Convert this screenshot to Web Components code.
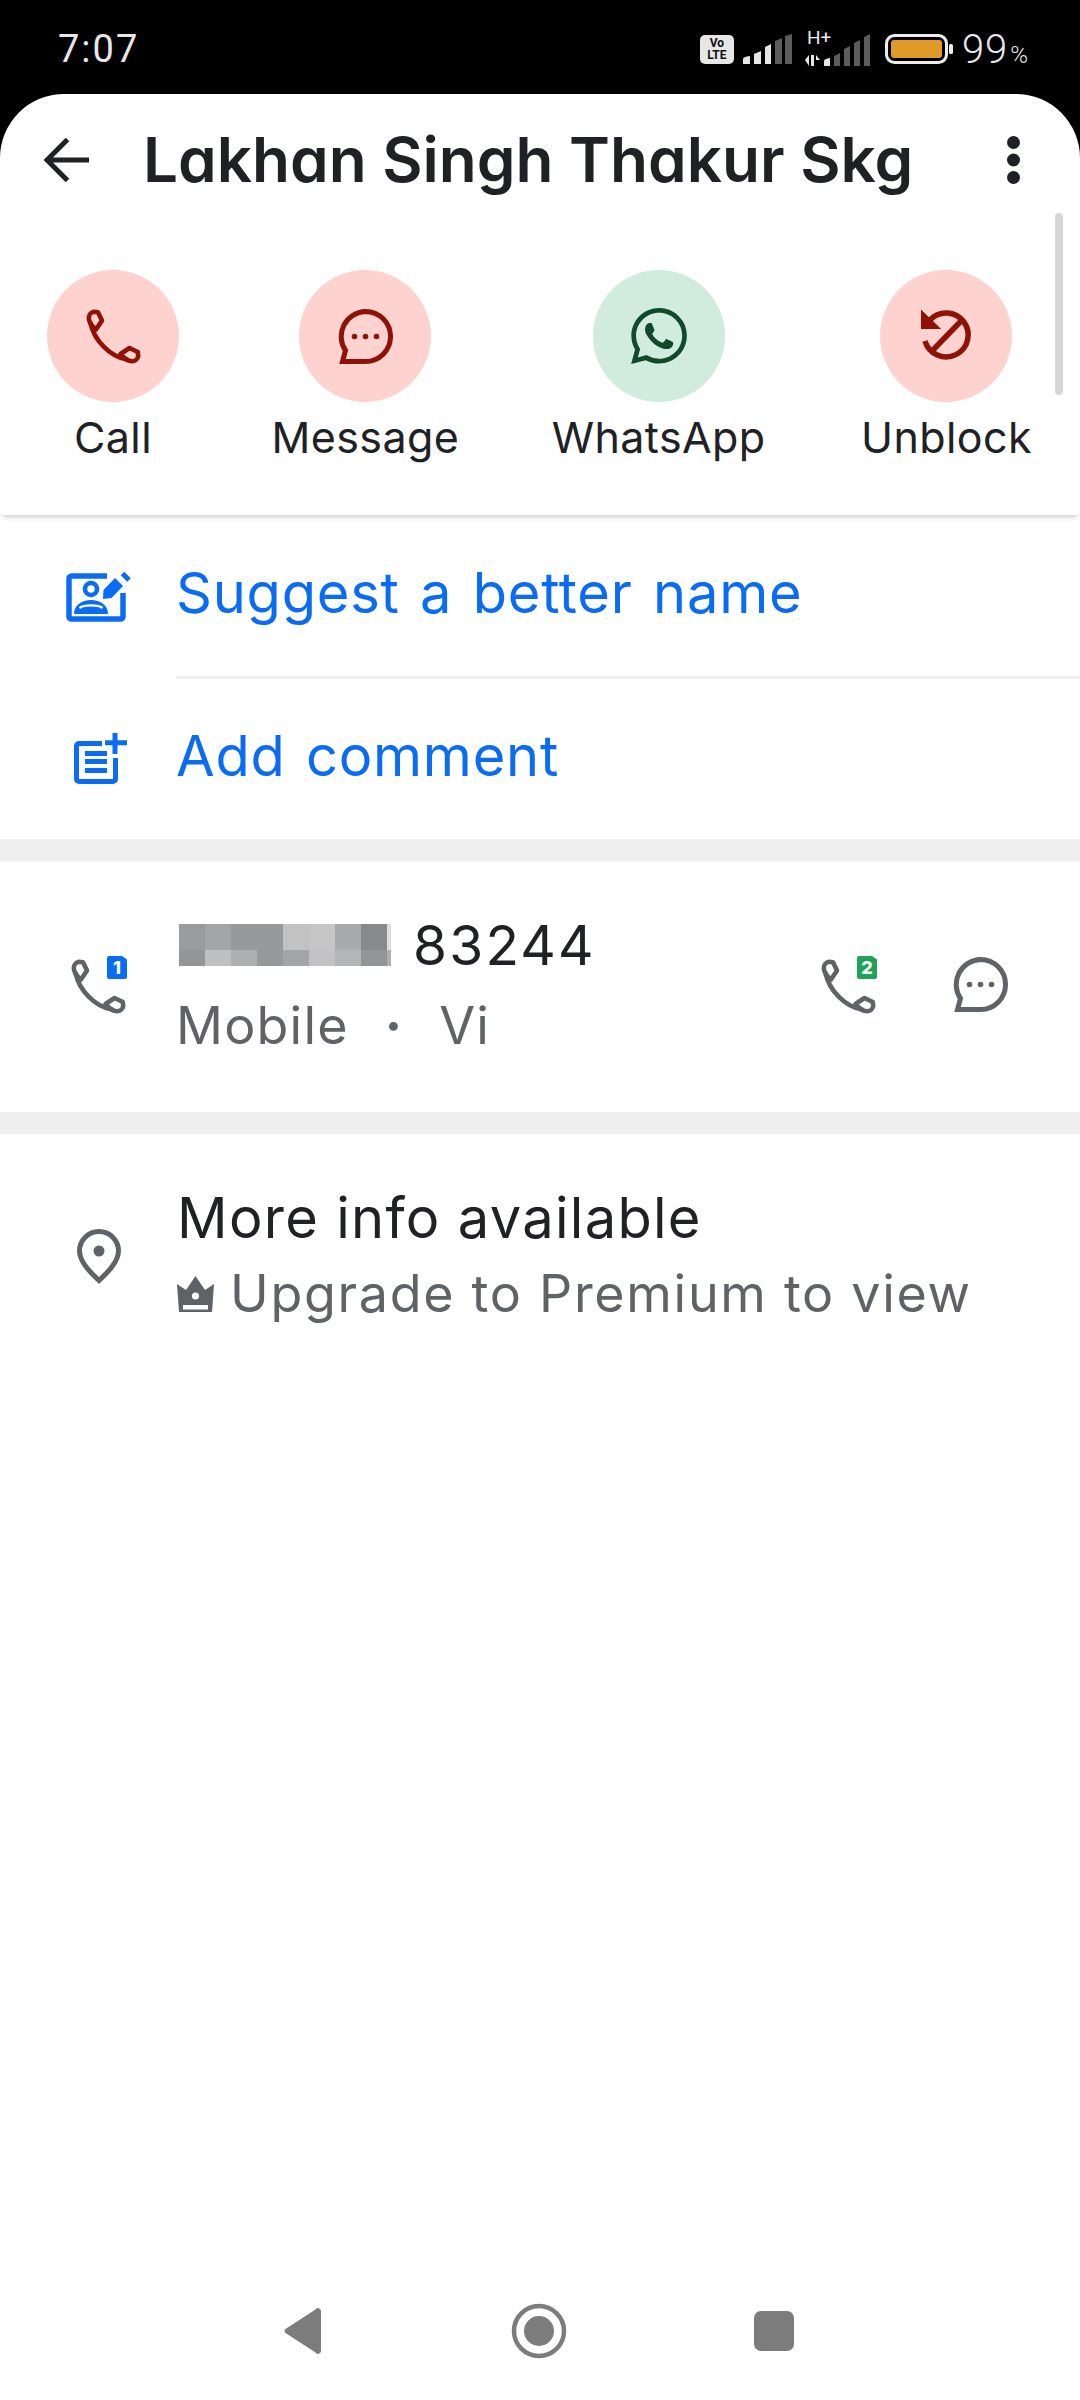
<!DOCTYPE html>
<html lang="en">
<head>
<meta charset="utf-8">
<title>Lakhan Singh Thakur Skg</title>
<style>
  html, body { margin: 0; padding: 0; background: #000; }
  body { width: 1080px; height: 2400px; font-family: Inter, "Liberation Sans", sans-serif; }
  contact-page { height: 2400px; }
</style>
</head>
<body>
<contact-page>
  <status-bar slot="status"></status-bar>
  <contact-header>Lakhan Singh Thakur Skg</contact-header>
  <action-row>
    <action-button icon="phone" tone="red">Call</action-button>
    <action-button icon="bubble" tone="red">Message</action-button>
    <action-button icon="whatsapp" tone="green">WhatsApp</action-button>
    <action-button icon="unblock" tone="red" style="margin-left:3px">Unblock</action-button>
  </action-row>
  <link-row icon="suggest" divider>Suggest a better name</link-row>
  <link-row icon="note">Add comment</link-row>
  <section-gap></section-gap>
  <number-row digits="83244" kind="Mobile" carrier="Vi"></number-row>
  <section-gap></section-gap>
  <info-row></info-row>
  <nav-bar></nav-bar>
</contact-page>

<script>
const ICONS = {
  phone: `<svg viewBox="0 0 55 55" width="55" height="55" fill="none" stroke="currentColor" stroke-width="4.6" stroke-linejoin="round" stroke-linecap="round">
    <path d="M8 2.8 12 3.2 16 11.5 10 20.5C4.5 16 2.8 12 2.8 9 2.8 6 5 3.2 8 2.8Z"/>
    <path d="M52.2 47 51.8 43 43.5 39 34.5 45C39 50.5 43 52.2 46 52.2 49 52.2 51.8 50 52.2 47Z"/>
    <path d="M4.5 14C8 31 24 48 41 50.5"/></svg>`,
  bubble: `<svg viewBox="0 0 55 55" width="55" height="55" fill="none" stroke="currentColor" stroke-width="5">
    <path d="M27.5 2.5A25 25 0 1 1 27.5 52.5H4.5L7.5 41.5A25 25 0 0 1 27.5 2.5Z"/>
    <g fill="currentColor" stroke="none"><circle cx="16.5" cy="27.5" r="2.8"/><circle cx="27.5" cy="27.5" r="2.8"/><circle cx="38.5" cy="27.5" r="2.8"/></g></svg>`,
  whatsapp: `<svg viewBox="0 0 24 24" width="56" height="56" fill="currentColor"><path d="M17.472 14.382c-.297-.149-1.758-.867-2.03-.967-.273-.099-.471-.148-.67.15-.197.297-.767.966-.94 1.164-.173.199-.347.223-.644.075-.297-.15-1.255-.463-2.39-1.475-.883-.788-1.48-1.761-1.653-2.059-.173-.297-.018-.458.13-.606.134-.133.298-.347.446-.52.149-.174.198-.298.298-.497.099-.198.05-.371-.025-.52-.075-.149-.669-1.612-.916-2.207-.242-.579-.487-.5-.669-.51-.173-.008-.371-.01-.57-.01-.198 0-.52.074-.792.372-.272.297-1.04 1.016-1.04 2.479 0 1.462 1.065 2.875 1.213 3.074.149.198 2.096 3.2 5.077 4.487.709.306 1.262.489 1.694.625.712.227 1.36.195 1.871.118.571-.085 1.758-.719 2.006-1.413.248-.694.248-1.289.173-1.413-.074-.124-.272-.198-.57-.347m-5.421 7.403h-.004a9.87 9.87 0 01-5.031-1.378l-.361-.214-3.741.982.998-3.648-.235-.374a9.86 9.86 0 01-1.51-5.26c.001-5.45 4.436-9.884 9.888-9.884 2.64 0 5.122 1.03 6.988 2.898a9.825 9.825 0 012.893 6.994c-.003 5.45-4.437 9.884-9.885 9.884m8.413-18.297A11.815 11.815 0 0012.05 0C5.495 0 .16 5.335.157 11.892c0 2.096.547 4.142 1.588 5.945L.057 24l6.305-1.654a11.882 11.882 0 005.683 1.448h.005c6.554 0 11.89-5.335 11.893-11.893a11.821 11.821 0 00-3.48-8.413Z"/></svg>`,
  unblock: `<svg viewBox="0 0 56 56" width="56" height="56" fill="none" stroke="currentColor" stroke-width="5.5">
    <path d="M12 12A22 22 0 1 1 7 33"/><path d="M44 12 15 42"/>
    <path d="M4.5 5 19.5 19.500H4.500Z" fill="currentColor" stroke-width="3"/></svg>`,
  suggest: `<svg viewBox="0 0 70 58" width="70" height="58" fill="none" stroke="currentColor" stroke-width="5.5">
    <path d="M43 8H7.5A2.5 2.5 0 0 0 5 10.5V48.5A2.5 2.5 0 0 0 7.5 51H56.5A2.5 2.5 0 0 0 59 48.5V25"/>
    <circle cx="27" cy="21" r="6" stroke-width="4.6"/>
    <path d="M10 46C10 37 18 32 27 32 36 32 44 37 44 46Z" fill="currentColor" stroke="none"/>
    <path d="M15.500 40C20 36.500 34 36.500 38.500 40" stroke="#fff" stroke-width="2.400"/>
    <path d="M39 31 39.500 22 51 10 59 18 47.500 30Z" fill="currentColor" stroke="none"/>
    <path d="M58.500 5.500 65 12" stroke-width="5"/></svg>`,
  note: `<svg viewBox="0 0 58 56" width="58" height="56" fill="none" stroke="currentColor" stroke-width="5">
    <path d="M30 12.500H7A2.500 2.500 0 0 0 4.500 15V48A2.500 2.500 0 0 0 7 50.500H41A2.500 2.500 0 0 0 43.500 48V27"/>
    <path d="M43 2V23M33 11.700H55M13 22.500H35M13 30.500H35M13 39.500H35"/></svg>`,
  pin: `<svg viewBox="0 0 44 55" width="44" height="55" fill="none" stroke="currentColor" stroke-width="5">
    <path d="M22 51.500C14 44 2.500 33 2.500 22A19.500 19.500 0 0 1 41.500 22C41.500 33 30 44 22 51.500Z"/>
    <circle cx="22" cy="22" r="5.500" fill="currentColor" stroke="none"/></svg>`,
  crown: `<svg viewBox="0 0 37 36" width="37" height="36"><path fill="currentColor" d="M0 8 9 14 18.500 0 28 14 37 8 35 36H2Z"/>
    <circle cx="18.500" cy="20" r="3.600" fill="#fff"/><rect x="6" y="29" width="25" height="4.500" fill="#fff"/></svg>`
};

class AppIcon extends HTMLElement {
  connectedCallback() {
    if (this.shadowRoot) return;
    this.attachShadow({ mode: "open" });
    this.shadowRoot.innerHTML = `<style>:host{display:inline-flex;line-height:0}</style>` + ICONS[this.getAttribute("name")];
  }
}
customElements.define("app-icon", AppIcon);

const statusTemplate = document.createElement("template");
statusTemplate.innerHTML = `
<style>
  :host { display: flex; align-items: center; height: 94px; padding: 4px 52px 0 58px; box-sizing: border-box;
    color: #e8e8e8; font-family: Roboto, sans-serif; background: #000; }
  .time { font-size: 38px; font-weight: 400; letter-spacing: 2px; margin-right: auto; }
  .volte { width: 34px; height: 29px; border-radius: 5px; background: #e6e6e6; color: #111; font: 700 12px/12.5px Roboto, sans-serif;
    display: flex; flex-direction: column; align-items: center; justify-content: center; text-align: center; margin-right: 9px; }
  svg { display: block; }
  .pct { font-size: 40px; font-weight: 300; letter-spacing: 1px; margin-left: 9px; display: flex; align-items: baseline; }
  .pct small { font-size: 24px; margin-left: 2px; letter-spacing: 0; }
  .hplus { position: relative; display: flex; }
  .hplus span { position: absolute; left: 2px; top: -5px; font: 400 19px/19px Roboto, sans-serif; }
</style>
<span class="time">7:07</span>
<span class="volte"><span>Vo</span><span>LTE</span></span>
<svg width="49" height="30" viewBox="0 0 49 30" fill="#e6e6e6">
  <path d="M0 25Q0 23 7 22V30H0ZM11 20 18 17V30H11ZM22 13 28 10V30H22Z"/>
  <path fill="#5c5c5c" d="M32 7 39 4V30H32ZM42 2 49 0V30H42Z"/>
</svg>
<span class="hplus" style="margin-left:13px">
  <span>H+</span>
  <svg width="66" height="33" viewBox="0 0 66 33" fill="#e6e6e6">
    <path d="M0 27 4 22V33ZM6 22H9V33H6ZM11 22 15 27H11V33H11Z"/>
    <path d="M19 28Q19 26 25 25V33H19Z"/>
    <path fill="#5c5c5c" d="M29 23 35 20V33H29ZM39 16 45 13V33H39ZM49 10 55 7V33H49ZM59 4 65 1V33H59Z"/>
  </svg>
</span>
<svg style="margin-left:14px" width="68" height="30" viewBox="0 0 68 30" fill="none">
  <rect x="1.500" y="1.500" width="60" height="27" rx="8" stroke="#ececec" stroke-width="3"/>
  <rect x="6" y="6" width="51" height="18" rx="3" fill="#e09a28"/>
  <rect x="64" y="10" width="4" height="10" rx="1.500" fill="#ececec"/>
</svg>
<span class="pct">99<small>%</small></span>
`;
class StatusBar extends HTMLElement {
  constructor() {
    super();
    this.attachShadow({ mode: "open" });
    this.shadowRoot.appendChild(statusTemplate.content.cloneNode(true));
  }
}
customElements.define("status-bar", StatusBar);

const pageTemplate = document.createElement("template");
pageTemplate.innerHTML = `
<style>
  :host { display: flex; flex-direction: column; width: 1080px; background: #000; color: #202124; }
  .sheet { flex: 1; display: flex; flex-direction: column; background: #fff; border-radius: 64px 64px 0 0; position: relative; overflow: hidden; }
</style>
<slot name="status"></slot>
<div class="sheet"><slot></slot></div>
`;
class ContactPage extends HTMLElement {
  constructor() {
    super();
    this.attachShadow({ mode: "open" });
    this.shadowRoot.appendChild(pageTemplate.content.cloneNode(true));
  }
}
customElements.define("contact-page", ContactPage);

const headerTemplate = document.createElement("template");
headerTemplate.innerHTML = `
<style>
  :host { display: flex; align-items: center; height: 132px; padding: 0 0 0 44px; box-sizing: border-box; }
  svg { display: block; flex: none; }
  .title { margin-left: 54px; font: 600 62px/1 Inter, sans-serif; font-feature-settings: "cv11" 1; letter-spacing: 0; color: #202124; white-space: nowrap; flex: 1; }
  .more { margin-right: 60px; }
</style>
<svg width="45" height="44" viewBox="0 0 45 44" fill="none" stroke="#202124" stroke-width="5"><path d="M45 22H3M23.500 1.500 3 22 23.500 42.500"/></svg>
<span class="title"><slot></slot></span>
<svg class="more" width="13" height="48" viewBox="0 0 13 48" fill="#202124"><circle cx="6.500" cy="6.500" r="6.500"/><circle cx="6.500" cy="24" r="6.500"/><circle cx="6.500" cy="41.500" r="6.500"/></svg>
`;
class ContactHeader extends HTMLElement {
  constructor() {
    super();
    this.attachShadow({ mode: "open" });
    this.shadowRoot.appendChild(headerTemplate.content.cloneNode(true));
  }
}
customElements.define("contact-header", ContactHeader);

const rowTemplate = document.createElement("template");
rowTemplate.innerHTML = `
<style>
  :host { display: flex; gap: 92.5px; height: 289px; padding: 44px 0 0 47px; box-sizing: border-box; position: relative;
    box-shadow: 0 5px 5px -3px rgba(0,0,0,.2); background: #fff; z-index: 1; }
  .scroll { position: absolute; left: 1055px; top: -13px; width: 8px; height: 182px; border-radius: 4px; background: #d6d6d6; }
</style>
<slot></slot>
<div class="scroll"></div>
`;
class ActionRow extends HTMLElement {
  constructor() {
    super();
    this.attachShadow({ mode: "open" });
    this.shadowRoot.appendChild(rowTemplate.content.cloneNode(true));
  }
}
customElements.define("action-row", ActionRow);

class ActionButton extends HTMLElement {
  connectedCallback() {
    if (this.shadowRoot) return;
    const green = this.getAttribute("tone") === "green";
    this.attachShadow({ mode: "open" });
    this.shadowRoot.innerHTML = `
      <style>
        :host { display: flex; flex-direction: column; align-items: center; min-width: 132px; }
        .disc { width: 132px; height: 132px; border-radius: 50%; display: flex; align-items: center; justify-content: center;
          background: ${green ? "#d1ebdd" : "#fdd2cf"}; color: ${green ? "#0f4a2c" : "#8f1206"}; }
        .label { margin-top: 10px; font: 400 43px/50px Inter, sans-serif; letter-spacing: .4px; color: #202124; white-space: nowrap; }
      </style>
      <div class="disc"><app-icon name="${this.getAttribute("icon")}"></app-icon></div>
      <div class="label"><slot></slot></div>`;
  }
}
customElements.define("action-button", ActionButton);

class LinkRow extends HTMLElement {
  connectedCallback() {
    if (this.shadowRoot) return;
    const name = this.getAttribute("icon");
    const divider = this.hasAttribute("divider");
    this.attachShadow({ mode: "open" });
    this.shadowRoot.innerHTML = `
      <style>
        :host { display: flex; align-items: stretch; height: ${divider ? 164 : 160}px; box-sizing: border-box; }
        .ico { flex: none; width: 176px; display: flex; align-items: center; color: #0a6cf5; box-sizing: border-box;
          padding-left: ${name === "suggest" ? 64 : 72}px; }
        .text { flex: 1; display: flex; align-items: center; padding-bottom: ${divider ? 5 : 7}px; font: 400 56px/1 Inter, sans-serif; letter-spacing: .75px; word-spacing: 4px; color: #0a6cf5;
          ${divider ? "border-bottom: 3px solid #eeeeee;" : ""} }
      </style>
      <div class="ico"><app-icon name="${name}"></app-icon></div>
      <div class="text"><slot></slot></div>`;
  }
}
customElements.define("link-row", LinkRow);

class SectionGap extends HTMLElement {
  connectedCallback() {
    if (this.shadowRoot) return;
    this.attachShadow({ mode: "open" });
    this.shadowRoot.innerHTML = `<style>:host{display:block;height:22px;background:#efefef}</style>`;
  }
}
customElements.define("section-gap", SectionGap);

// the blurred part of the number, two rows of mosaic cells
const MOSAIC = [
  ["#9a9b9d", "#a4a5a7", "#98999b", "#98999b", "#c2c2c3", "#c6c6c7", "#a8a9ab", "#88898b", "#dedede"],
  ["#949597", "#c0c0c2", "#aeafb1", "#98999b", "#a4a5a7", "#c2c2c4", "#b4b5b7", "#949597", "#b0b0b0"]
];
class MosaicBlock extends HTMLElement {
  connectedCallback() {
    if (this.shadowRoot) return;
    this.attachShadow({ mode: "open" });
    const cells = MOSAIC.flat().map(c => `<i style="background:${c}"></i>`).join("");
    this.shadowRoot.innerHTML = `
      <style>
        :host { display: grid; grid-template-columns: repeat(8, 26px) 4px; grid-template-rows: 26px 16px; width: 212px; height: 42px; margin-left: 3px; }
      </style>${cells}`;
  }
}
customElements.define("mosaic-block", MosaicBlock);

class SimPhone extends HTMLElement {
  connectedCallback() {
    if (this.shadowRoot) return;
    const n = this.getAttribute("sim");
    this.attachShadow({ mode: "open" });
    this.shadowRoot.innerHTML = `
      <style>
        :host { display: block; position: relative; width: 56px; height: 55px; color: #5f6368; }
        .sim { position: absolute; left: 36px; top: -3px; width: 20px; height: 23px; border-radius: 2px; color: #fff;
          background: ${n === "1" ? "#0a6cf5" : "#1fa35b"}; clip-path: polygon(0 0, 75% 0, 100% 15%, 100% 100%, 0 100%);
          font: 800 18px/23px Inter, sans-serif; text-align: center; }
      </style>
      <app-icon name="phone"></app-icon><span class="sim">${n}</span>`;
  }
}
customElements.define("sim-phone", SimPhone);

class NumberRow extends HTMLElement {
  connectedCallback() {
    if (this.shadowRoot) return;
    this.attachShadow({ mode: "open" });
    this.shadowRoot.innerHTML = `
      <style>
        :host { display: flex; align-items: center; height: 251px; box-sizing: border-box; padding: 0 72px 0 71px; }
        .body { margin-left: 49px; flex: 1; display: flex; flex-direction: column; padding-bottom: 4px; }
        .num { display: flex; align-items: center; gap: 22px; font: 400 55px/64px Inter, sans-serif; letter-spacing: 2.2px; color: #202124; }
        .sub { display: flex; align-items: center; gap: 36px; margin-top: 19px; font: 400 52px/60px Inter, sans-serif; letter-spacing: 1.2px; color: #5f6368; }
        .sub b { font-weight: 700; }
        .msg { color: #5f6368; margin-left: 76px; }
      </style>
      <sim-phone sim="1"></sim-phone>
      <div class="body">
        <div class="num"><mosaic-block></mosaic-block><span>${this.getAttribute("digits")}</span></div>
        <div class="sub"><span>${this.getAttribute("kind")}</span><b>·</b><span>${this.getAttribute("carrier")}</span></div>
      </div>
      <sim-phone sim="2"></sim-phone>
      <span class="msg"><app-icon name="bubble"></app-icon></span>`;
  }
}
customElements.define("number-row", NumberRow);

class InfoRow extends HTMLElement {
  connectedCallback() {
    if (this.shadowRoot) return;
    this.attachShadow({ mode: "open" });
    this.shadowRoot.innerHTML = `
      <style>
        :host { display: flex; align-items: center; padding: 52px 0 0 77px; }
        .pin { color: #5f6368; margin-top: 2px; }
        .body { margin-left: 56px; }
        .head { font: 400 56px/64px Inter, sans-serif; letter-spacing: 1.3px; color: #202124; }
        .sub { display: flex; align-items: center; gap: 16px; margin-top: 14px; font: 400 52px/60px Inter, sans-serif; letter-spacing: 1.7px; color: #5f6368; }
      </style>
      <app-icon class="pin" name="pin"></app-icon>
      <div class="body">
        <div class="head">More info available</div>
        <div class="sub"><app-icon name="crown"></app-icon><span>Upgrade to Premium to view</span></div>
      </div>`;
  }
}
customElements.define("info-row", InfoRow);

class NavBar extends HTMLElement {
  connectedCallback() {
    if (this.shadowRoot) return;
    this.attachShadow({ mode: "open" });
    this.shadowRoot.innerHTML = `
      <style>
        :host { display: flex; align-items: center; margin-top: auto; height: 54px; margin-bottom: 42px; padding-left: 284px; }
        svg { display: block; flex: none; }
      </style>
      <svg width="37" height="46" viewBox="0 0 37 46" fill="#7c7c7c"><path d="M31.500 1.500A3 3 0 0 1 37 3V43A3 3 0 0 1 31.500 44.500L1.500 25A2.500 2.500 0 0 1 1.500 21Z"/></svg>
      <svg style="margin-left:190px" width="56" height="56" viewBox="0 0 56 56"><circle cx="28" cy="28" r="25" fill="none" stroke="#7c7c7c" stroke-width="4.500"/><circle cx="28" cy="28" r="15" fill="#7c7c7c"/></svg>
      <svg style="margin-left:187px" width="40" height="40" viewBox="0 0 40 40"><rect width="40" height="40" rx="7" fill="#7c7c7c"/></svg>`;
  }
}
customElements.define("nav-bar", NavBar);
</script>
</body>
</html>
